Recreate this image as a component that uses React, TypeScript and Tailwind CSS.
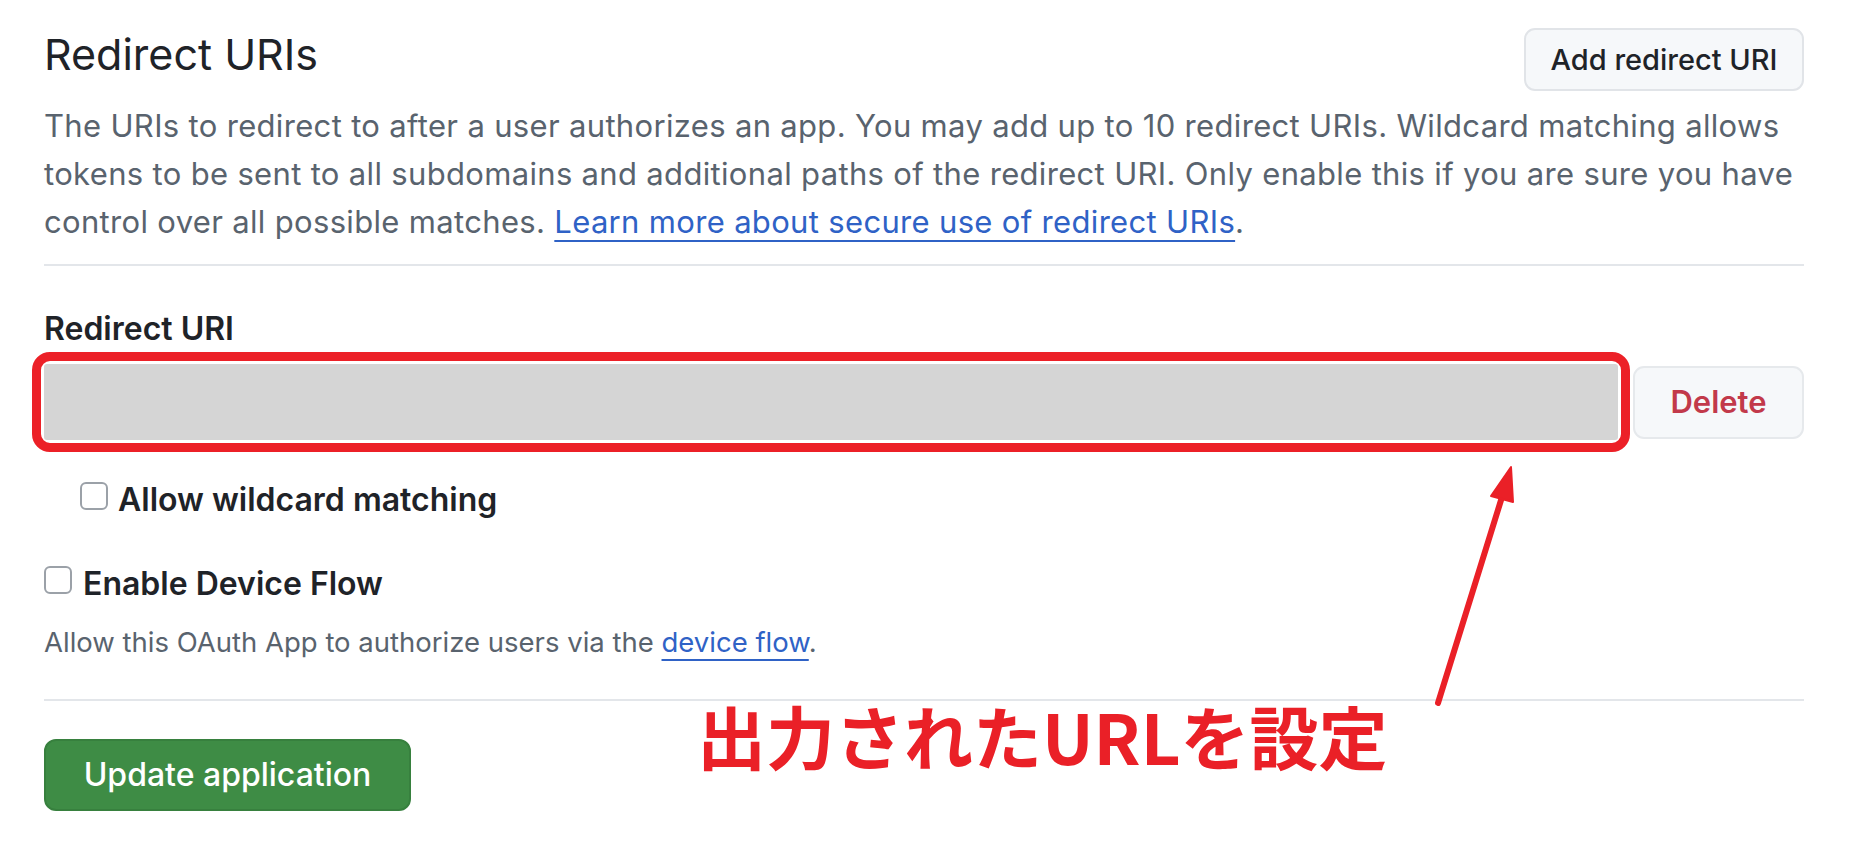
import React from 'react';

const Checkbox: React.FC = () => (
    <input
        type="checkbox"
        className="appearance-none w-[28px] h-[28px] shrink-0 rounded-[6px] border-[2px] border-[#9ba1a8] bg-white"
    />
);

const App: React.FC = () => {
    return (
        <div className="relative min-h-screen bg-white font-['Inter','Noto_Sans',sans-serif] text-[#1f2328]">
            <div className="pl-[44px] pr-[53px] pt-[28px]">
                <div className="flex items-start justify-between h-[63px]">
                    <h2 className="mt-[3px] text-[43px] leading-[46px] font-normal">Redirect URIs</h2>
                    <button className="h-[63px] w-[280px] rounded-[11px] border-[2px] border-[#e1e4e8] bg-[#f6f8fa] text-[29px] font-medium text-[#1f2328]">
                        Add redirect URI
                    </button>
                </div>

                <p className="mt-[11px] text-[31px] leading-[48px] tracking-[0.33px] text-[#59636e]">
                    The URIs to redirect to after a user authorizes an app. You may add up to 10 redirect URIs. Wildcard matching allows
                    <br />
                    tokens to be sent to all subdomains and additional paths of the redirect URI. Only enable this if you are sure you have
                    <br />
                    control over all possible matches.{' '}
                    <a href="#" className="text-[#2f62c6] underline decoration-[2px] underline-offset-[7px]">
                        Learn more about secure use of redirect URIs
                    </a>
                    .
                </p>

                <div className="mt-[18px] h-[2px] bg-[#e3e6ea]" />

                <label className="block mt-[45px] text-[32px] leading-[36px] font-semibold">Redirect URI</label>

                <div className="mt-[5px] flex items-center">
                    <div className="flex-1 -ml-[12px] rounded-[18px] border-[9px] border-[#ec2027] p-[3px]">
                        <div className="h-[76px] rounded-[3px] bg-[#d5d5d5]" />
                    </div>
                    <button className="ml-[3px] h-[73px] w-[171px] rounded-[11px] border-[2px] border-[#e6e9ec] bg-[#f6f8fa] text-[31px] font-semibold text-[#c2394a]">
                        Delete
                    </button>
                </div>

                <div className="mt-[30px] pl-[36px] flex items-start gap-[10px]">
                    <Checkbox />
                    <span className="text-[32px] leading-[36px] font-semibold">Allow wildcard matching</span>
                </div>

                <div className="mt-[48px] flex items-start gap-[11px]">
                    <Checkbox />
                    <span className="text-[32px] leading-[36px] font-semibold">Enable Device Flow</span>
                </div>

                <p className="mt-[22px] text-[27.5px] leading-[36px] text-[#59636e]">
                    Allow this OAuth App to authorize users via the{' '}
                    <a href="#" className="text-[#2f62c6] underline decoration-[2px] underline-offset-[7px]">
                        device flow
                    </a>
                    .
                </p>

                <div className="mt-[39px] h-[2px] bg-[#e3e6ea]" />

                <button className="mt-[38px] h-[72px] w-[367px] rounded-[12px] border-[2px] border-[#37803e] bg-[#3e8c45] text-[32px] font-medium text-white">
                    Update application
                </button>
            </div>

            <div className="absolute left-[697px] top-[701px] text-[69px] leading-[69px] font-bold text-[#ea2027] font-['Noto_Sans_CJK_JP',sans-serif]">
                出力されたURLを設定
            </div>

            <svg className="absolute left-0 top-0 pointer-events-none" width="1857" height="847" viewBox="0 0 1857 847">
                <line x1="1438" y1="703" x2="1502" y2="497" stroke="#ea2027" strokeWidth="6" strokeLinecap="round" />
                <polygon points="1511,467 1491,496 1513,502" fill="#ea2027" stroke="#ea2027" strokeWidth="2" strokeLinejoin="round" />
            </svg>
        </div>
    );
};

export default App;
